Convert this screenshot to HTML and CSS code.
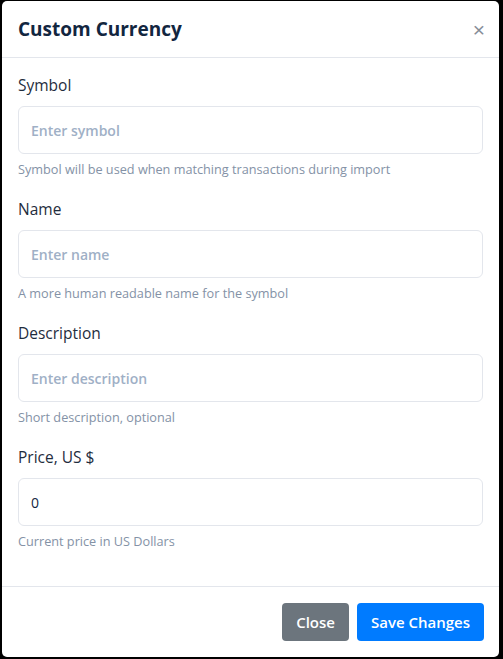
FILE: index.html
```html
<!DOCTYPE html>
<html lang="en">
<head>
  <meta charset="UTF-8" />
  <meta name="viewport" content="width=device-width, initial-scale=1.0"/>
  <title>Custom Currency</title>
  <link rel="stylesheet" href="styles.css">
</head>
<body>
  <div class="modal">
    <div class="modal-header">
      <h1 class="modal-title">Custom Currency</h1>
      <button class="close-x" type="button">&times;</button>
    </div>

    <div class="modal-body">
      <div class="form-group">
        <label for="symbol">Symbol</label>
        <input type="text" id="symbol" placeholder="Enter symbol" />
        <small>Symbol will be used when matching transactions during import</small>
      </div>
      <div class="form-group">
        <label for="name">Name</label>
        <input type="text" id="name" placeholder="Enter name" />
        <small>A more human readable name for the symbol</small>
      </div>
      <div class="form-group">
        <label for="description">Description</label>
        <input type="text" id="description" placeholder="Enter description" />
        <small>Short description, optional</small>
      </div>
      <div class="form-group">
        <label for="price">Price, US $</label>
        <input type="text" id="price" value="0" />
        <small>Current price in US Dollars</small>
      </div>
    </div>

    <div class="modal-footer">
      <button class="btn btn-secondary" type="button">Close</button>
      <button class="btn btn-primary" type="button">Save Changes</button>
    </div>
  </div>
</body>
</html>
```

FILE: styles.css
```css
body {
  margin: 0;
  background: #000;
  font-family: "Open Sans", Arial, sans-serif;
}
.modal {
  margin: 1px 0 0 2px;
  width: 497px;
  background: #fff;
  border-radius: 5px;
}
.modal-header {
  height: 56px;
  padding: 0 14px 0 16px;
  border-bottom: 1px solid #e3e6ec;
  display: flex;
  align-items: center;
  justify-content: space-between;
}
.modal-title {
  margin: 0;
  font-size: 19px;
  font-weight: 700;
  color: #12263f;
}
.close-x {
  background: none;
  border: none;
  padding: 0;
  font-size: 21px;
  line-height: 1;
  color: #868d98;
  cursor: pointer;
}
.modal-body {
  padding: 16px;
}
.form-group {
  display: flex;
  flex-direction: column;
  margin-bottom: 20px;
}
.form-group label {
  font-size: 15.5px;
  line-height: 22px;
  color: #1f2d3d;
  margin-bottom: 10px;
}
.form-group input {
  height: 48px;
  box-sizing: border-box;
  border: 1px solid #e3e6ec;
  border-radius: 6px;
  padding: 0 12px;
  font-family: inherit;
  font-size: 14px;
  color: #12263f;
}
.form-group input::placeholder {
  color: #9fb0c6;
  font-weight: 600;
}
.form-group small {
  margin-top: 6px;
  font-size: 12.7px;
  line-height: 18px;
  color: #8492a6;
}
.modal-footer {
  border-top: 1px solid #e3e6ec;
  padding: 16px 15px 16px 16px;
  display: flex;
  justify-content: flex-end;
  gap: 8px;
}
.btn {
  height: 38px;
  border: none;
  border-radius: 4px;
  padding: 0 14px;
  font-family: inherit;
  font-size: 15px;
  font-weight: 600;
  color: #fff;
  cursor: pointer;
}
.btn-secondary {
  background: #6c757d;
}
.btn-primary {
  background: #007bff;
}
```
